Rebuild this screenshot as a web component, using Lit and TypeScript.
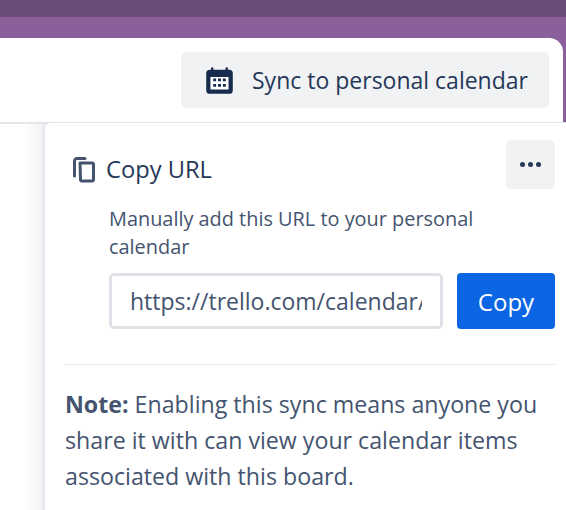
import { LitElement, html, css } from "lit";
import { customElement } from "lit/decorators.js";

@customElement("app-root")
export class AppRoot extends LitElement {
  static styles = css`
    :host { display: block; width: 566px; height: 510px; overflow: hidden; position: relative; background: #fff;
      font-family: "Open Sans", "Noto Sans", sans-serif; color: #172b4d; }
    .top { height: 17px; background: #6b4d7a; }
    .band { height: 107px; background: #8a5f9b; box-sizing: border-box; padding-top: 21px; padding-right: 3px; }
    .panel { height: 86px; box-sizing: border-box; background: #fff; border-top-right-radius: 14px; border-bottom: 2px solid #e4e6ea;
      display: flex; justify-content: flex-end; padding: 14px 14px 0 0; }
    .sync { width: 368px; height: 56px; box-sizing: border-box; background: #f1f2f4; border-radius: 5px; display: flex; align-items: center; gap: 18px; padding-left: 24px; }
    .sync svg { width: 29px; height: 29px; flex: none; }
    .sync span { font-size: 23px; color: #253858; white-space: nowrap; }
    .shadow { position: absolute; left: 24px; top: 124px; width: 20px; height: 386px; background: linear-gradient(to right, #fff, #f1f2f5); }
    .pop { position: absolute; left: 44px; top: 122px; width: 540px; height: 400px; box-sizing: border-box; background: #fff;
      border: 1px solid #e4e6ea; border-right: none; border-top-left-radius: 6px; padding: 17px 0 0 20px; box-shadow: -1px 0 2px rgba(9,30,66,.08); }
    .inner { width: 490px; }
    .head { display: flex; align-items: center; height: 49px; }
    .head svg { width: 26px; height: 30px; flex: none; margin: 9px 9px 0 6px; }
    .head h2 { margin: 8px 0 0; font-size: 23.7px; font-weight: 400; color: #253858; flex: 1; }
    .more { width: 49px; height: 49px; background: #f1f2f4; border-radius: 5px; display: flex; align-items: center; justify-content: center; gap: 3px; }
    .more i { width: 5px; height: 5px; border-radius: 50%; background: #253858; display: block; }
    .body { padding-left: 44px; }
    .hint { margin: 16px 0 0; font-size: 19.9px; line-height: 28px; color: #44546f; width: 400px; }
    .row { display: flex; gap: 14px; margin-top: 12px; }
    .url { width: 334px; height: 56px; box-sizing: border-box; border: 3px solid #dfe1e6; border-radius: 5px; padding: 0 18px; font: inherit; font-size: 23px; color: #44546f; background: #fff; outline: none; margin: 0; }
    .copy { width: 98px; height: 56px; background: #0c66e4; color: #fff; border-radius: 4px; font-size: 24px; display: flex; align-items: center; justify-content: center; }
    hr { border: none; height: 1px; background: #e4e6ea; margin: 35px 0 0; }
    .note { margin: 21px 0 0; font-size: 23.2px; line-height: 36px; color: #44546f; }
    .note b { font-weight: 700; }
  `;

  render() {
    return html`
      <div class="top"></div>
      <div class="band">
        <div class="panel">
          <div class="sync">
            <svg viewBox="0 0 24 24"><path fill="#172b4d" d="M6 1a1 1 0 0 1 1 1v1h10V2a1 1 0 1 1 2 0v1h1a3 3 0 0 1 3 3v14a3 3 0 0 1-3 3H4a3 3 0 0 1-3-3V6a3 3 0 0 1 3-3h1V2a1 1 0 0 1 1-1z"/><rect fill="#fff" x="4.500" y="9" width="15" height="10.500" rx=".5"/><path fill="#172b4d" d="M6.800 10.300h2.400v2.400H6.800zm4 0h2.400v2.400h-2.400zm4 0h2.400v2.400h-2.400zM6.800 14.800h2.400v2.400H6.800zm4 0h2.400v2.400h-2.400zm4 0h2.400v2.400h-2.400z"/></svg>
            <span>Sync to personal calendar</span>
          </div>
        </div>
      </div>
      <div class="shadow"></div>
      <div class="pop">
        <div class="inner">
          <div class="head">
            <svg viewBox="0 0 26 30"><path fill="none" stroke="#44546f" stroke-width="3" stroke-linejoin="round" d="M9 9h12a1.500 1.500 0 0 1 1.500 1.500v15A1.500 1.500 0 0 1 21 27H11a1.500 1.500 0 0 1-1.500-1.500z"/><path fill="none" stroke="#44546f" stroke-width="3" stroke-linecap="round" d="M14 4.500H6A2.500 2.500 0 0 0 3.500 7v15"/></svg>
            <h2>Copy URL</h2>
            <div class="more"><i></i><i></i><i></i></div>
          </div>
          <div class="body">
            <p class="hint">Manually add this URL to your personal calendar</p>
            <div class="row">
              <input class="url" readonly .value=${"https://trello.com/calendar/5f3a9c1e7b"} />
              <div class="copy">Copy</div>
            </div>
          </div>
          <hr />
          <p class="note"><b>Note:</b> Enabling this sync means anyone you share it with can view your calendar items associated with this board.</p>
        </div>
      </div>
    `;
  }
}
